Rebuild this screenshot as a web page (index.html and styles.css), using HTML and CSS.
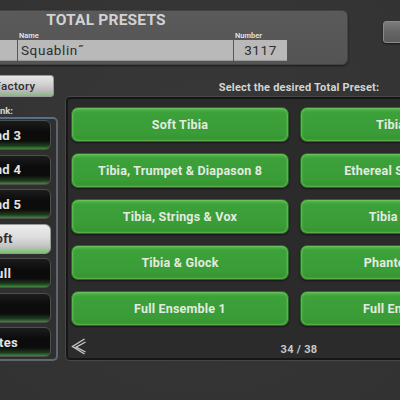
FILE: index.html
```html
<!DOCTYPE html>
<html>
<head>
<meta charset="utf-8">
<link rel="stylesheet" href="styles.css">
</head>
<body>
<div class="screen">
  <header class="top">
    <section class="preset-panel">
      <h1 class="title">TOTAL PRESETS</h1>
      <div class="fields">
        <div class="field field-cat">
          <span class="field-label">Group</span>
          <div class="field-box"></div>
        </div>
        <div class="field field-name">
          <span class="field-label">Name</span>
          <div class="field-box">Squablin˝</div>
        </div>
        <div class="field field-num">
          <span class="field-label">Number</span>
          <div class="field-box center">3117</div>
        </div>
      </div>
    </section>
    <button class="side-btn"></button>
  </header>

  <main class="main">
    <aside class="banks">
      <div class="bank-types">
        <button class="type-btn">Factory</button>
      </div>
      <div class="bank-label">Bank:</div>
      <div class="bank-list">
        <button class="bank-btn">Band 3</button>
        <button class="bank-btn">Band 4</button>
        <button class="bank-btn">Band 5</button>
        <button class="bank-btn selected">Soft</button>
        <button class="bank-btn">Full</button>
        <button class="bank-btn"></button>
        <button class="bank-btn">Notes</button>
      </div>
    </aside>

    <section class="presets">
      <div class="presets-heading">Select the desired Total Preset:</div>
      <div class="presets-panel">
        <div class="preset-grid">
          <button class="preset-btn">Soft Tibia</button>
          <button class="preset-btn">Tibia &amp; Vox</button>
          <button class="preset-btn">Tibia, Trumpet &amp; Diapason 8</button>
          <button class="preset-btn">Ethereal Strings &amp; Vox</button>
          <button class="preset-btn">Tibia, Strings &amp; Vox</button>
          <button class="preset-btn">Tibia Bright 8'</button>
          <button class="preset-btn">Tibia &amp; Glock</button>
          <button class="preset-btn">Phantom Organ</button>
          <button class="preset-btn">Full Ensemble 1</button>
          <button class="preset-btn">Full Ensemble 2</button>
        </div>
        <div class="pager">
          <button class="prev-btn" aria-label="Previous">
            <svg width="16" height="18" viewBox="0 0 16 18">
              <polyline points="13.5,1 1.5,8.5 13.5,16" fill="none" stroke="#c9c9c9" stroke-width="1.4"/>
              <polyline points="14.5,4 5,9.2 14.5,14" fill="none" stroke="#c9c9c9" stroke-width="1.4"/>
            </svg>
          </button>
          <span class="page-count">34 / 38</span>
        </div>
      </div>
    </section>
  </main>
</div>
</body>
</html>
```

FILE: styles.css
```css
* { box-sizing: border-box; }

html, body {
  margin: 0;
  padding: 0;
}

body {
  width: 400px;
  height: 400px;
  overflow: hidden;
  background: #353535;
  font-family: Roboto, "DejaVu Sans", sans-serif;
}

.screen {
  width: 400px;
  height: 400px;
  background: radial-gradient(circle at 50% 40%, #383838, #323232);
}

button {
  font-family: inherit;
  padding: 0;
  margin: 0;
}

/* ---------- header ---------- */
.top {
  display: flex;
  align-items: flex-start;
  padding-top: 10px;
  height: 65px;
}

.preset-panel {
  margin-left: -136px;
  width: 484px;
  height: 55px;
  background: linear-gradient(#5a5a5a, #545454);
  border: 1px solid #444;
  border-radius: 6px;
  box-shadow: 0 1px 2px rgba(0,0,0,.5);
  flex: none;
}

.title {
  margin: 0;
  text-align: center;
  font-size: 15.5px;
  line-height: 18px;
  font-weight: 700;
  color: #d2d2d2;
  letter-spacing: 0.2px;
}

.fields {
  display: flex;
  gap: 1px;
  padding-left: 75px;
  margin-top: 2px;
}

.field {
  display: flex;
  flex-direction: column;
}

.field-cat { width: 77px; }
.field-cat .field-label { visibility: hidden; }
.field-name { width: 215px; }
.field-num { width: 53px; }

.field-label {
  font-size: 7.5px;
  line-height: 9px;
  font-weight: 700;
  color: #dedede;
  padding-left: 1px;
}

.field-box {
  height: 21px;
  background: #b9b9b9;
  border-bottom: 1px solid #9a9a9a;
  color: #2e2e2e;
  font-size: 13.5px;
  line-height: 21px;
  padding-left: 3px;
  letter-spacing: 0.6px;
}

.field-box.center {
  text-align: center;
  padding-left: 0;
}

.side-btn {
  margin-left: 35px;
  margin-top: 11px;
  width: 50px;
  height: 22px;
  flex: none;
  border: 1px solid #8a8a8a;
  border-radius: 3px;
  background: linear-gradient(#7c7c7c, #656565 50%, #5c5c5c);
  box-shadow: 0 1px 2px rgba(0,0,0,.6);
}

/* ---------- main ---------- */
.main {
  display: flex;
  margin-top: 10px;
}

.banks {
  margin-left: -60px;
  width: 118px;
  flex: none;
  display: flex;
  flex-direction: column;
}

.bank-types {
  display: flex;
  justify-content: flex-end;
  padding-right: 4px;
  height: 22px;
}

.type-btn {
  width: 76px;
  height: 22px;
  border: 1px solid #9a9a9a;
  border-radius: 3px;
  background: linear-gradient(#e6e6e6, #cfcfcf 45%, #b5b5b5 80%, #7cbf74 100%);
  color: #2c2c2c;
  font-size: 11.5px;
  font-weight: 500;
  letter-spacing: 0.4px;
  text-align: center;
  padding-right: 2px;
}

.bank-label {
  padding-top: 8px;
  height: 20px;
  line-height: 12px;
  font-size: 9.5px;
  font-weight: 700;
  color: #d6d6d6;
  text-align: right;
  padding-right: 45px;
}

.bank-list {
  height: 244px;
  border: 2px solid #5f666e;
  border-top-color: #56708a;
  border-radius: 5px;
  background: #2f2f2f;
  padding: 1px 5px 0 3px;
  display: flex;
  flex-direction: column;
  gap: 4.5px;
}

.bank-btn {
  height: 30px;
  flex: none;
  border: 1px solid #4e4e4e;
  border-radius: 6px;
  background: linear-gradient(#1c1c1c, #0b0b0b 40%, #0c0c0c 70%, #1e3b1e 88%, #3f8a3c 100%);
  color: #e4e4e4;
  font-size: 13px;
  font-weight: 700;
  letter-spacing: 0.3px;
  text-align: center;
  padding-left: 4px;
}

.bank-btn.selected {
  background: linear-gradient(#ededed, #dcdcdc 45%, #c4c4c4 75%, #7cbf74 100%);
  color: #2e2e2e;
  border-color: #9a9a9a;
}

.presets {
  margin-left: 8px;
  width: 460px;
  flex: none;
}

.presets-heading {
  height: 22px;
  padding-top: 4px;
  line-height: 18px;
  text-align: center;
  font-size: 11px;
  font-weight: 700;
  color: #d4d4d4;
  letter-spacing: 0.2px;
  padding-left: 6px;
}

.presets-panel {
  height: 263px;
  border: 2px solid #161616;
  border-radius: 4px;
  background: #2b2b2b;
  box-shadow: 0 0 0 1px #474747;
  padding: 8px 3px 0 3px;
  display: flex;
  flex-direction: column;
}

.preset-grid {
  display: grid;
  grid-template-columns: 218px 218px;
  grid-auto-rows: 35px;
  gap: 11px;
}

.preset-btn {
  border: 1px solid #2a6a28;
  border-radius: 7px;
  background: linear-gradient(#52b34d 0%, #3da13a 14%, #399c37 80%, #33902f 100%);
  box-shadow: inset 0 0 2px 1px rgba(140, 215, 110, .55), 0 1px 2px rgba(0,0,0,.5);
  color: #e2ebe0;
  font-size: 12.5px;
  font-weight: 700;
  letter-spacing: 0.2px;
  text-align: center;
  white-space: nowrap;
}

.pager {
  flex: 1;
  display: grid;
  grid-template-columns: 1fr auto 1fr;
  align-items: center;
  padding-top: 9px;
}

.prev-btn {
  grid-column: 1;
  justify-self: start;
  margin-left: 0;
  background: none;
  border: none;
  width: 16px;
  height: 18px;
  display: flex;
}

.page-count {
  grid-column: 2;
  font-size: 11px;
  font-weight: 700;
  color: #c8c8c8;
  margin-top: 5px;
  margin-left: 6px;
  letter-spacing: 0.3px;
}
```
